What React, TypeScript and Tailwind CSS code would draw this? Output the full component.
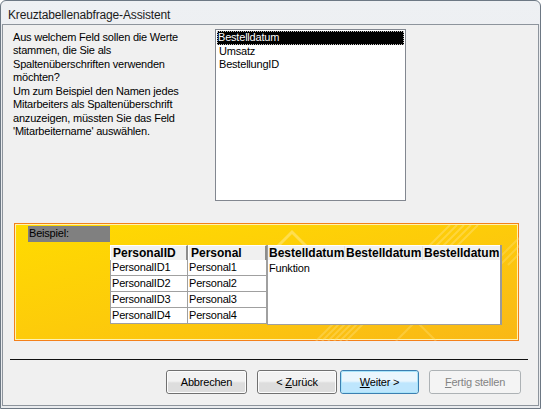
import React from "react";

const font = "font-['Liberation_Sans',Arial,sans-serif]";

function Btn({
  children,
  w,
  variant = "normal",
}: {
  children: React.ReactNode;
  w: string;
  variant?: "normal" | "default" | "disabled";
}) {
  const outer =
    variant === "default"
      ? "border-[#3c7fb1]"
      : variant === "disabled"
      ? "border-[#adb2b5]"
      : "border-[#707070]";
  const inner =
    variant === "default"
      ? "border-[#a8e4fa] bg-linear-to-b from-[#eaf6fd] from-45% to-[#bee6fd] to-55%"
      : variant === "disabled"
      ? "border-[#f4f4f4] bg-[#f4f4f4]"
      : "border-[#fcfcfc] bg-linear-to-b from-[#f2f2f2] from-45% to-[#dddddd] to-55%";
  const text = variant === "disabled" ? "text-[#838383]" : "text-black";
  return (
    <div className={`${w} h-[24px] rounded-[3px] border ${outer} overflow-hidden`}>
      <div className={`w-full h-full rounded-[2px] border ${inner} flex items-center justify-center text-[11px] tracking-[-0.2px] ${text}`}>
        <span className="whitespace-pre">{children}</span>
      </div>
    </div>
  );
}

export default function App() {
  const rows = [1, 2, 3, 4];
  return (
    <div className={`w-[541px] h-[409px] bg-white ${font}`}>
      <div className="w-[541px] h-[409px] rounded-t-[6px] border border-[#6d7884] bg-linear-to-b from-[#eef0f3] to-[#e4e6ea] flex flex-col overflow-hidden">
        <div className="h-[23px] pl-[7px] pt-[7px] text-[12px] leading-[14px] tracking-[-0.15px] text-[#1b1b1b]">
          Kreuztabellenabfrage-Assistent
        </div>
        <div className="flex-1 px-[1px] pb-[2px] flex flex-col bg-[#e9ebee]">
          <div className="flex-1 border border-[#8d949c] bg-[#f0f0f0] flex flex-col">
            {/* top section */}
            <div className="flex items-start">
              <div className="ml-[10px] mt-[6px] w-[202px] text-[11px] leading-[13.3px] tracking-[-0.2px] text-black whitespace-nowrap">
                <p>
                  Aus welchem Feld sollen die Werte
                  <br />
                  stammen, die Sie als
                  <br />
                  Spaltenüberschriften verwenden
                  <br />
                  möchten?
                </p>
                <p className="mt-[1px]">
                  Um zum Beispiel den Namen jedes
                  <br />
                  Mitarbeiters als Spaltenüberschrift
                  <br />
                  anzuzeigen, müssten Sie das Feld
                  <br />
                  'Mitarbeitername' auswählen.
                </p>
              </div>
              <div className="mt-[4px] w-[191px] h-[172px] border border-[#828790] bg-white p-[1px] text-[11px] leading-[13px] tracking-[-0.2px]">
                <div className="h-[14px] bg-black text-white px-[1px] outline outline-1 outline-dotted outline-offset-[-1px] outline-[#c0c0c0]">
                  Bestelldatum
                </div>
                <div className="h-[13px] px-[2px] text-black">Umsatz</div>
                <div className="h-[13px] px-[2px] text-black">BestellungID</div>
              </div>
            </div>

            {/* yellow example panel */}
            <div className="ml-[11px] mt-[22px] w-[505px] h-[118px] border border-[#f4801a]">
              <div className="relative w-full h-full border border-[#fff3b0] bg-linear-to-br from-[#ffdb00] via-[#fdcb0a] to-[#f9b816] flex flex-col">
                <svg
                  className="absolute inset-0 pointer-events-none"
                  width="503"
                  height="116"
                  viewBox="0 0 503 116"
                >
                  <polyline
                    points="259,24 276,7 293,24"
                    fill="none"
                    stroke="#ffe98a"
                    strokeOpacity="0.55"
                    strokeWidth="3"
                  />
                  {[0, 1, 2, 3, 4].map((i) => (
                    <line
                      key={"a" + i}
                      x1={410 + i * 7}
                      y1={24}
                      x2={434 + i * 7}
                      y2={0}
                      stroke="#ffe27a"
                      strokeOpacity="0.45"
                      strokeWidth="2"
                    />
                  ))}
                  {[0, 1, 2].map((i) => (
                    <line
                      key={"c" + i}
                      x1={476 + i * 8}
                      y1={40}
                      x2={503 + i * 8}
                      y2={13}
                      stroke="#ffe27a"
                      strokeOpacity="0.35"
                      strokeWidth="2"
                    />
                  ))}
                  {[0, 1, 2, 3, 4, 5].map((i) => (
                    <line
                      key={"b" + i}
                      x1={300 + i * 6}
                      y1={116}
                      x2={318 + i * 6}
                      y2={98}
                      stroke="#ffe27a"
                      strokeOpacity="0.4"
                      strokeWidth="2"
                    />
                  ))}
                  <polyline
                    points="380,116 400,96 420,116"
                    fill="none"
                    stroke="#ffe27a"
                    strokeOpacity="0.35"
                    strokeWidth="2"
                  />
                </svg>
                <div className="relative ml-[12px] mt-[1px] w-[82px] h-[16px] bg-[#808080] text-[11px] leading-[15px] tracking-[-0.2px] px-[1px] text-black">
                  Beispiel:
                </div>
                <div className="relative ml-[94px] mt-[3px] flex text-[11px] tracking-[-0.2px] text-black">
                  {/* PersonalID column */}
                  <div className="w-[78px] flex flex-col">
                    <div className="h-[15px] bg-[#f0f0f0] border-t border-l border-white border-r-2 border-r-[#8c8c8c] font-bold text-[12px] tracking-normal leading-[14px] pl-[2px]">
                      PersonalID
                    </div>
                    {rows.map((r) => (
                      <div
                        key={r}
                        className="h-[16px] bg-white border-l border-b border-r border-[#a0a0a0] leading-[15px] pl-[1px]"
                      >
                        PersonalID{r}
                      </div>
                    ))}
                  </div>
                  {/* Personal column */}
                  <div className="w-[79px] flex flex-col">
                    <div className="h-[15px] bg-[#f0f0f0] border-t border-l border-white border-r-2 border-r-[#8c8c8c] font-bold text-[12px] tracking-normal leading-[14px] pl-[2px]">
                      Personal
                    </div>
                    {rows.map((r) => (
                      <div
                        key={r}
                        className="h-[16px] bg-white border-b border-r border-[#a0a0a0] leading-[15px] pl-[1px]"
                      >
                        Personal{r}
                      </div>
                    ))}
                  </div>
                  {/* crosstab block */}
                  <div className="w-[235px] h-[80px] flex flex-col border-l border-b border-[#a0a0a0] border-r-2 border-r-[#9a9a9a] bg-white">
                    <div className="h-[15px] bg-[#f0f0f0] flex font-bold text-[12px] tracking-normal leading-[14px] border-t border-white whitespace-nowrap">
                      <div className="w-[77px] border-r border-[#e2e2e2] pl-[1px]">Bestelldatum</div>
                      <div className="w-[78px] border-r border-[#e2e2e2] pl-[1px]">Bestelldatum</div>
                      <div className="flex-1 pl-[1px]">Bestelldatum</div>
                    </div>
                    <div className="pl-[1px] leading-[14px] mt-[1px]">Funktion</div>
                  </div>
                </div>
              </div>
            </div>

            {/* separator */}
            <div className="ml-[7px] mt-[18px] w-[518px] h-[1px] bg-[#101010]" />

            {/* buttons */}
            <div className="flex mt-[10px] ml-[163px]">
              <Btn w="w-[81px]">Abbrechen</Btn>
              <div className="ml-[10px]">
                <Btn w="w-[80px]">
                  &lt; <span className="underline">Z</span>urück
                </Btn>
              </div>
              <div className="ml-[3px]">
                <Btn w="w-[79px]" variant="default">
                  <span className="underline">W</span>eiter &gt;
                </Btn>
              </div>
              <div className="ml-[10px]">
                <Btn w="w-[92px]" variant="disabled">
                  <span className="underline">F</span>ertig stellen
                </Btn>
              </div>
            </div>
          </div>
        </div>
      </div>
    </div>
  );
}
